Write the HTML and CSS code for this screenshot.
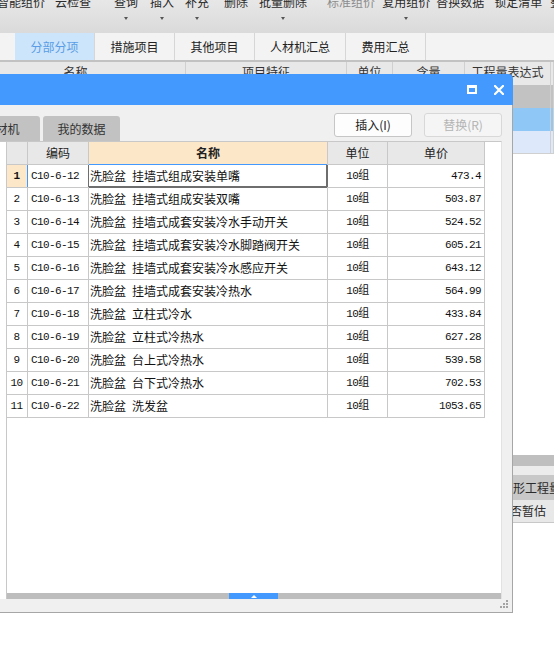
FILE: index.html
```html
<!DOCTYPE html>
<html lang="zh-CN">
<head>
<meta charset="utf-8">
<title>分部分项</title>
<link rel="stylesheet" href="styles.css">
</head>
<body>
<div class="app">
  <div class="toolbar">
    <div class="tb-item"><span>智能组价</span></div>
    <div class="tb-item"><span>云检查</span></div>
    <div class="tb-item"><span>查询</span><i class="caret"></i></div>
    <div class="tb-item"><span>插入</span><i class="caret"></i></div>
    <div class="tb-item"><span>补充</span><i class="caret"></i></div>
    <div class="tb-item"><span>删除</span></div>
    <div class="tb-item"><span>批量删除</span><i class="caret"></i></div>
    <div class="tb-item dim"><span>标准组价</span></div>
    <div class="tb-item"><span>复用组价</span><i class="caret"></i></div>
    <div class="tb-item"><span>替换数据</span></div>
    <div class="tb-item"><span>锁定清单</span></div>
    <div class="tb-item"><span>整理</span></div>
  </div>
  <div class="tabs">
    <div class="tab active">分部分项</div>
    <div class="tab">措施项目</div>
    <div class="tab">其他项目</div>
    <div class="tab wide">人材机汇总</div>
    <div class="tab">费用汇总</div>
  </div>
  <div class="bgrid bhead">
    <div class="bc first">名称</div>
    <div class="bc">项目特征</div>
    <div class="bc">单位</div>
    <div class="bc">含量</div>
    <div class="bc">工程量表达式</div>
    <div class="bc"></div>
  </div>
  <div class="bgrid brow gray"><div class="bc"></div><div class="bc"></div><div class="bc"></div><div class="bc"></div><div class="bc"></div><div class="bc"></div></div>
  <div class="bgrid brow blue"><div class="bc"></div><div class="bc"></div><div class="bc"></div><div class="bc"></div><div class="bc"></div><div class="bc"></div></div>
  <div class="bgrid brow lblue"><div class="bc"></div><div class="bc"></div><div class="bc"></div><div class="bc"></div><div class="bc"></div><div class="bc"></div></div>

  <div class="lower">
    <div class="splitter"></div>
    <div class="lgap"></div>
    <div class="lhead">图形工程量</div>
    <div class="lrow">是否暂估</div>
  </div>
</div>

<div class="dialog">
  <div class="dlg-title">
    <span class="ico-max"></span>
    <svg class="ico-close" width="10" height="10" viewBox="0 0 10 10"><path d="M1 1L9 9M9 1L1 9" stroke="#fff" stroke-width="2.2" stroke-linecap="square"/></svg>
  </div>
  <div class="dlg-body">
    <div class="dlg-bar">
      <div class="dtabs">
        <div class="dtab first">人材机</div>
        <div class="dtab">我的数据</div>
      </div>
      <div class="btns">
        <button class="btn">插入(I)</button>
        <button class="btn disabled">替换(R)</button>
      </div>
    </div>
    <div class="grid-wrap">
      <div class="pane">
        <div class="table">
          <div class="hc"></div><div class="hc">编码</div><div class="hc sel">名称</div><div class="hc">单位</div><div class="hc">单价</div>

          <div class="c num cur">1</div><div class="c code">C10-6-12</div><div class="c name focus">洗脸盆&ensp;挂墙式组成安装单嘴</div><div class="c unit">10组</div><div class="c price">473.4</div>
          <div class="c num">2</div><div class="c code">C10-6-13</div><div class="c name">洗脸盆&ensp;挂墙式组成安装双嘴</div><div class="c unit">10组</div><div class="c price">503.87</div>
          <div class="c num">3</div><div class="c code">C10-6-14</div><div class="c name">洗脸盆&ensp;挂墙式成套安装冷水手动开关</div><div class="c unit">10组</div><div class="c price">524.52</div>
          <div class="c num">4</div><div class="c code">C10-6-15</div><div class="c name">洗脸盆&ensp;挂墙式成套安装冷水脚踏阀开关</div><div class="c unit">10组</div><div class="c price">605.21</div>
          <div class="c num">5</div><div class="c code">C10-6-16</div><div class="c name">洗脸盆&ensp;挂墙式成套安装冷水感应开关</div><div class="c unit">10组</div><div class="c price">643.12</div>
          <div class="c num">6</div><div class="c code">C10-6-17</div><div class="c name">洗脸盆&ensp;挂墙式成套安装冷热水</div><div class="c unit">10组</div><div class="c price">564.99</div>
          <div class="c num">7</div><div class="c code">C10-6-18</div><div class="c name">洗脸盆&ensp;立柱式冷水</div><div class="c unit">10组</div><div class="c price">433.84</div>
          <div class="c num">8</div><div class="c code">C10-6-19</div><div class="c name">洗脸盆&ensp;立柱式冷热水</div><div class="c unit">10组</div><div class="c price">627.28</div>
          <div class="c num">9</div><div class="c code">C10-6-20</div><div class="c name">洗脸盆&ensp;台上式冷热水</div><div class="c unit">10组</div><div class="c price">539.58</div>
          <div class="c num">10</div><div class="c code">C10-6-21</div><div class="c name">洗脸盆&ensp;台下式冷热水</div><div class="c unit">10组</div><div class="c price">702.53</div>
          <div class="c num">11</div><div class="c code">C10-6-22</div><div class="c name">洗脸盆&ensp;洗发盆</div><div class="c unit">10组</div><div class="c price">1053.65</div>
        </div>
        <div class="hscroll"><div class="thumb"><i class="tri"></i></div></div>
      </div>
    </div>
    <div class="dlg-foot"></div>
    <svg class="grip" width="9" height="8" viewBox="0 0 9 8"><g fill="#a4a4a4"><rect x="6" y="0" width="2" height="2"/><rect x="3" y="3" width="2" height="2"/><rect x="6" y="3" width="2" height="2"/><rect x="0" y="6" width="2" height="2"/><rect x="3" y="6" width="2" height="2"/><rect x="6" y="6" width="2" height="2"/></g></svg>
  </div>
</div>
</body>
</html>
```

FILE: styles.css
```css
* { box-sizing: border-box; }
html, body { margin: 0; padding: 0; }
body {
  width: 554px;
  height: 665px;
  overflow: hidden;
  background: #fff;
  font-family: "Noto Sans CJK SC", "Noto Sans", sans-serif;
  font-size: 12px;
  color: #222;
  position: relative;
}

/* ---------- background application ---------- */
.app { width: 554px; }

.toolbar {
  height: 33px;
  display: flex;
  align-items: flex-start;
  background: linear-gradient(#e7e7e7, #dadada);
  overflow: hidden;
  white-space: nowrap;
}
.tb-item {
  flex: none;
  display: flex;
  flex-direction: column;
  align-items: center;
  margin-top: -5px;
  line-height: 14px;
  color: #2b2b2b;
}
.tb-item:nth-child(1) { margin-left: -3px; }
.tb-item:nth-child(2) { margin-left: 10px; }
.tb-item:nth-child(3) { margin-left: 23px; }
.tb-item:nth-child(4) { margin-left: 12px; }
.tb-item:nth-child(5) { margin-left: 11px; }
.tb-item:nth-child(6) { margin-left: 15px; }
.tb-item:nth-child(7) { margin-left: 11px; }
.tb-item:nth-child(8) { margin-left: 20px; }
.tb-item:nth-child(9) { margin-left: 7px; }
.tb-item:nth-child(10) { margin-left: 6px; }
.tb-item:nth-child(11) { margin-left: 10px; }
.tb-item:nth-child(12) { margin-left: 8px; }
.tb-item.dim { color: #8c8c8c; }
.caret {
  display: block;
  margin-top: 8px;
  width: 0;
  height: 0;
  border-left: 2.5px solid transparent;
  border-right: 2.5px solid transparent;
  border-top: 3px solid #555;
}

.tabs {
  height: 29px;
  display: flex;
  padding-left: 15px;
  background: #f3f3f3;
  border-bottom: 2px solid #c2c2c2;
}
.tab {
  width: 80px;
  height: 27px;
  line-height: 27px;
  text-align: center;
  border-right: 1px solid #d6d6d6;
  color: #222;
  font-size: 12px;
}
.tab.wide { width: 91px; }
.tab.active { background: #cde5fa; color: #5a9de6; }

.bgrid {
  display: grid;
  grid-template-columns: 186px 161px 46px 72px 86px 3px;
}
.bc { border-right: 1px solid #d0d0d0; }
.bhead {
  height: 23px;
  background: #e8e8e8;
  line-height: 19px;
  color: #333;
  text-align: center;
}
.bhead .first { padding-right: 34px; }
.brow { height: 23px; }
.brow.gray { background: #c2c2c2; }
.brow.blue { background: #8fc8f7; }
.brow.lblue { background: #dde8fa; border-bottom: 1px solid #d0d0d0; }

.lower { margin-top: 301px; }
.splitter { height: 11px; background: #bfbfbf; }
.lgap { height: 9px; background: #ececec; }
.lhead {
  height: 25px;
  line-height: 25px;
  background: #c8c8c8;
  padding-left: 501px;
  white-space: nowrap;
  color: #2a2a2a;
}
.lrow {
  height: 23px;
  line-height: 22px;
  background: #e8e8e8;
  padding-left: 498px;
  white-space: nowrap;
  border-bottom: 1px solid #c8c8c8;
  color: #2a2a2a;
}

/* ---------- dialog ---------- */
.dialog {
  position: absolute;
  left: 0;
  top: 74px;
  width: 513px;
  height: 539px;
  display: flex;
  flex-direction: column;
}
.dlg-title {
  height: 31px;
  flex: none;
  background: #4499ff;
  border-top-right-radius: 5px;
  display: flex;
  align-items: center;
  justify-content: flex-end;
  padding-right: 9px;
  gap: 17px;
}
.ico-max {
  display: block;
  width: 10px;
  height: 9px;
  border: 2px solid #fff;
  border-top-width: 3px;
}
.ico-close { display: block; }

.dlg-body {
  flex: 1;
  position: relative;
  display: flex;
  flex-direction: column;
  background: #f0f0f0;
  border-right: 1px solid #a6a6a6;
  border-bottom: 1px solid #a6a6a6;
  padding-right: 10px;
}
.dlg-bar {
  height: 36px;
  flex: none;
  display: flex;
  justify-content: space-between;
  align-items: flex-start;
}
.dtabs { display: flex; margin-top: 11px; }
.dtab {
  width: 77px;
  height: 25px;
  line-height: 25px;
  text-align: center;
  background: #c2c2c2;
  border-radius: 3px 3px 0 0;
  color: #333;
}
.dtab.first { margin-left: -37px; }
.dtab + .dtab { margin-left: 3px; }
.btns { display: flex; gap: 12px; margin-top: 8px; }
.btn {
  width: 78px;
  height: 24px;
  padding: 0;
  border: 1px solid #c6c6c6;
  border-radius: 3px;
  background: #fdfdfd;
  font-family: "Noto Sans CJK SC", "Noto Sans", sans-serif;
  font-size: 12px;
  line-height: 20px;
  color: #222;
}
.btn.disabled { background: #f5f5f5; border-color: #d8d8d8; color: #b4b4b4; }

.grid-wrap {
  flex: 1;
  background: #fff;
  border-top: 1px solid #c8c8c8;
  display: flex;
  border-right: 1px solid #e2e2e2;
}
.pane {
  flex: 1;
  margin-left: 6px;
  border-left: 1px solid #c8c8c8;
  display: flex;
  flex-direction: column;
  justify-content: space-between;
}
.table {
  display: grid;
  grid-template-columns: 20px 60px 238px 59px 96px;
  grid-auto-rows: 22px;
  gap: 1px;
  width: max-content;
  background: #c8c8c8;
  border-right: 1px solid #c8c8c8;
  border-bottom: 1px solid #c8c8c8;
}
.hc {
  background: #e8e8e8;
  text-align: center;
  line-height: 22px;
  color: #222;
}
.hc.sel {
  background: #fde7c9;
  font-weight: bold;
  box-shadow: 0 1px 0 #4499ff;
}
.c {
  background: #fff;
  line-height: 22px;
  white-space: nowrap;
  overflow: hidden;
  color: #111;
}
.num, .code, .price, .unit {
  font-family: "Liberation Mono", "Noto Sans CJK SC", monospace;
  font-size: 11px;
  letter-spacing: -0.6px;
}
.num { text-align: center; padding-right: 1px; }
.num.cur {
  background: #fde7c9;
  font-weight: bold;
  box-shadow: 1px 0 0 #4499ff;
}
.code { padding-left: 3px; }
.name { padding-left: 1px; font-size: 12px; }
.name.focus {
  box-shadow: -1px 0 0 #6e6e6e, 1px 0 0 #6e6e6e, 0 1px 0 #6e6e6e, inset -1px -1px 0 #6e6e6e;
}
.unit { text-align: center; }
.unit { font-size: 11px; }
.price { text-align: right; padding-right: 3px; }

.hscroll {
  height: 6px;
  flex: none;
  background: #bdbdbd;
  display: flex;
}
.thumb {
  margin-left: 222px;
  width: 49px;
  background: #4499ff;
  display: flex;
  justify-content: center;
  align-items: center;
}
.tri {
  display: block;
  width: 0;
  height: 0;
  border-left: 3px solid transparent;
  border-right: 3px solid transparent;
  border-bottom: 3px solid #fff;
}
.dlg-foot { height: 13px; flex: none; }
.grip {
  position: absolute;
  right: 3px;
  bottom: 4px;
  display: block;
}
```
